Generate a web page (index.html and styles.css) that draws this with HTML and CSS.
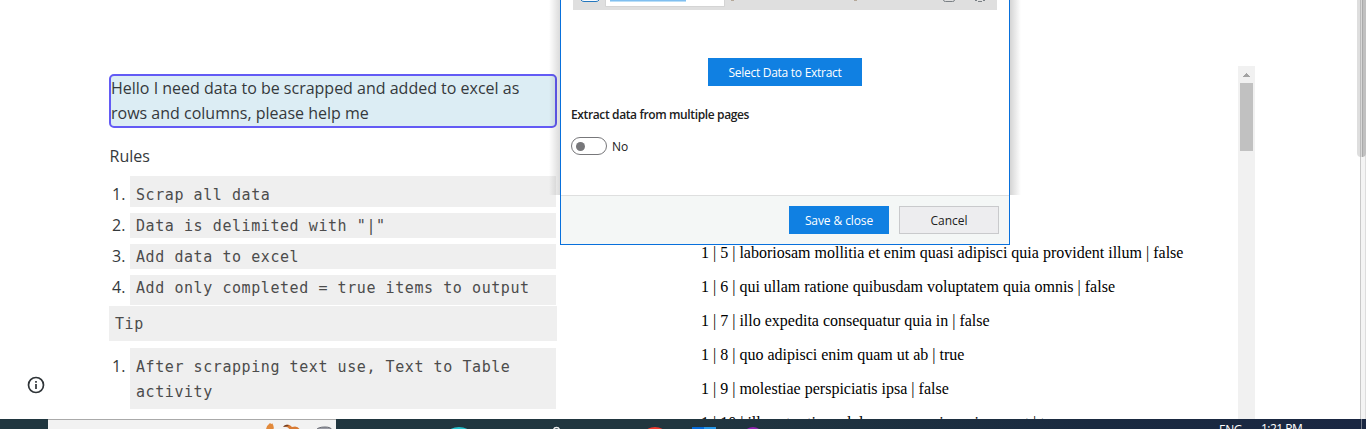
FILE: index.html
```
<!DOCTYPE html>
<html lang="en">
<head>
<meta charset="utf-8">
<title>Data scraping</title>
<link rel="stylesheet" href="styles.css">
</head>
<body>
<div class="screen">
  <main class="page">
    <aside class="rail">
      <svg class="info" width="18" height="18" viewBox="0 0 18 18"><circle cx="9" cy="9" r="7.5" fill="none" stroke="#2f3438" stroke-width="1.7"/><path d="M9 8v5M9 5v1.8" stroke="#2f3438" stroke-width="1.7"/></svg>
    </aside>
    <section class="post">
      <div class="question"><span class="q1">Hello I need data to be scrapped and added to excel as</span><br><span class="q2">rows and columns, please help me</span></div>
      <p class="heading">Rules</p>
      <ol class="rules">
        <li><span class="num">1.</span><code class="first">Scrap all data</code></li>
        <li><span class="num">2.</span><code>Data is delimited with "|"</code></li>
        <li><span class="num">3.</span><code>Add data to excel</code></li>
        <li><span class="num">4.</span><code class="last">Add only completed = true items to output</code></li>
      </ol>
      <code class="tip">Tip</code>
      <ol class="rules tips">
        <li><span class="num">1.</span><code class="first last">After scrapping text use, Text to Table<br>activity</code></li>
      </ol>
    </section>
    <section class="data">
      <p>1 | 5 | laboriosam mollitia et enim quasi adipisci quia provident illum | false</p>
      <p>1 | 6 | qui ullam ratione quibusdam voluptatem quia omnis | false</p>
      <p>1 | 7 | illo expedita consequatur quia in | false</p>
      <p>1 | 8 | quo adipisci enim quam ut ab | true</p>
      <p>1 | 9 | molestiae perspiciatis ipsa | false</p>
      <p>1 | 10 | illo est ratione doloremque quia maiores aut | true</p>
    </section>
    <div class="scroll"><svg width="17" height="17" viewBox="0 0 17 17"><path d="M5 11V10h1V9h1V8h1V7h1v1h1v1h1v1h1v1z" fill="#a3a3a3"/></svg><div class="thumb"></div></div>
    <div class="outer"><div class="outer-thumb"></div></div>
  </main>
  <footer class="taskbar">
    <div class="search">
      <svg width="288" height="10" viewBox="0 0 288 10"><path d="M218 10q0-4 4-7q2 2 2 0q3 4 1 7z" fill="#e28a3c"/><path d="M235 7q5-5 9 0q6-2 8 3h-10q-2-4-7-3" fill="#d87b35"/><path d="M235 7q3-4 6-1" fill="#704028"/><path d="M268 10q2-3 9-3q6 0 7 3" fill="#9a9ba4" stroke="#686b74"/></svg>
    </div>
    <svg class="apps" width="380" height="10" viewBox="0 0 380 10"><ellipse cx="75" cy="14" rx="11" ry="6" fill="#27c3ce"/><circle cx="172.500" cy="11.500" r="3" fill="none" stroke="#eee" stroke-width="1.300"/><ellipse cx="271" cy="14" rx="10" ry="6" fill="#ed3b31"/><path d="M308 8h12v2h-12z" fill="#066bd9"/><path d="M320 8h12v2h-12z" fill="#2798e9"/><ellipse cx="369" cy="14" rx="8" ry="6" fill="#8d23ad"/></svg>
    <div class="tray"><span>ENG</span><span class="clock">1:21 PM</span></div>
    <div class="desk-edge"></div>
  </footer>
  <div class="shadow left"></div>
  <div class="shadow right"></div>
  <div class="dialog">
    <div class="table-head">
      <svg width="424" height="10" viewBox="0 0 424 10"><path d="M8 0q1 1.500 3 1.500h12q2 0 3-1.500" fill="#f7fbff" stroke="#2477bd"/><path d="M33 0h118v6H33z" fill="#fff"/><path d="M32.500 0v6.500h119V0" fill="none" stroke="#d4d4d4"/><path d="M37 0h76v1H37z" fill="#80bff0"/><path d="M37 1h76v1H37z" fill="#b9def7"/><path d="M158 0h3v1h-3zM281 0h3v1h-3z" fill="#b5a899"/><path d="M370.500 0q0 1.500 2 1.500h7q2 0 2-1.500" fill="none" stroke="#7a8085"/><path d="M402 .5h2M405 1.500h4M410 .5h2" stroke="#7a8085"/></svg>
    </div>
    <div class="button primary select"><span>Select Data to Extract</span></div>
    <div class="label">Extract data from multiple pages</div>
    <div class="toggle-row"><span class="toggle"><i></i></span><span class="state">No</span></div>
    <div class="actions">
      <div class="button primary"><span class="save">Save &amp; close</span></div>
      <div class="button plain"><span>Cancel</span></div>
    </div>
  </div>
</div>
</body>
</html>
```
FILE: styles.css
```
* { box-sizing: border-box; }
body { margin: 0; background: #fff; overflow: hidden; }
p, ol { margin: 0; padding: 0; list-style: none; }
svg { display: block; flex: none; }
.screen { position: relative; width: 1366px; height: 429px; overflow: hidden; }
.page { display: flex; height: 419px; overflow: hidden; }
.rail { width: 109px; padding: 376px 0 0 27px; }
.post { width: 448px; padding-top: 74px; font: 16px/25px "Open Sans", "Noto Sans", sans-serif; color: #35393c; }
.question { height: 54px; border: 2px solid #635bf5; border-radius: 5px; background: #dcedf4; white-space: nowrap; }
.heading { margin-top: 16px; padding-left: .5px; }
.rules { margin-top: 7px; display: flex; flex-direction: column; gap: 6px; }
.rules li { display: flex; align-items: flex-start; }
.num { width: 21px; padding-left: 3px; }
.rules li:first-child .num { padding-top: 6px; }
code { display: block; font: 15px/25px "DejaVu Sans Mono", monospace; letter-spacing: .57px; color: #4c4c4c; background: #efefef; white-space: nowrap; }
.rules code { width: 426px; height: 25px; padding: 1px 0 0 6px; }
.rules .first { height: 31px; padding-top: 7px; }
.rules .last { height: 30px; }
.rules .first.last { height: 61px; }
.tip { height: 35px; margin-top: 1px; padding: 6px 6px 0; }
.tips { margin-top: 7px; }
.data { width: 681px; padding: 236px 0 0 144px; font: 16px/34px "Liberation Serif", serif; color: #000; white-space: nowrap; }
.scroll { width: 17px; height: 353px; margin-top: 66px; background: #f1f1f1; }
.thumb { width: 13px; height: 68px; margin-left: 2px; background: #c1c1c1; }
.outer { width: 6px; margin-left: 105px; background: #f4f4f4; border-left: 1px solid #c8c8c8; border-right: 1px solid #ddd; }
.outer-thumb { width: 9px; height: 157px; margin-left: -4px; border-radius: 0 0 4px 4px; background: linear-gradient(90deg, #dedede 0 3px, #bbb 3px 4px, #d8d8d8 4px 5px, #aaa 5px 6px, #c0c0c0 6px); }
.taskbar { display: flex; height: 10px; overflow: hidden; background: linear-gradient(90deg, #20363f, #21363f 50%, #1a2a40 80%, #1a2742); }
.search { flex: none; width: 288px; margin-left: 48px; background: #f2f2f2; border-top: 1px solid #aaa; }
.apps { margin-left: 48px; }
.tray { display: flex; flex: none; width: 84px; margin-left: 455px; padding-top: 4px; font: 12px/13px "Open Sans", sans-serif; color: #fff; letter-spacing: -.5px; white-space: nowrap; }
.clock { margin-left: 19px; margin-top: -1px; }
.desk-edge { width: 1px; margin-left: 58px; background: #737b89; }
.shadow { position: absolute; top: 0; height: 195px; width: 11px; }
.left { left: 549px; background: linear-gradient(90deg, transparent, rgba(0,0,0,.14)); }
.right { left: 1010px; background: linear-gradient(270deg, transparent, rgba(0,0,0,.17)); }
.dialog { position: absolute; left: 560px; top: 0; width: 450px; height: 245px; display: flex; flex-direction: column; background: #fff; border: 1px solid #0870dc; border-top: 0; font: 12px/16px "Open Sans", sans-serif; color: #202020; white-space: nowrap; }
.table-head { width: 424px; height: 10px; margin-left: 12px; background: #dfdfdf; }
.button { display: flex; width: 100px; height: 28px; align-items: center; justify-content: center; padding-top: 2px; }
.primary { background: #1080e2; color: #fff; }
.select { width: 154px; margin: 48px 0 0 147px; letter-spacing: -.27px; }
.save { letter-spacing: -.1px; }
.label { margin: 21px 0 0 10px; font-weight: 600; letter-spacing: -.37px; }
.toggle-row { display: flex; align-items: center; gap: 5px; height: 18px; margin: 14px 0 0 10px; }
.state { padding-top: 2px; }
.toggle { display: flex; align-items: center; width: 36px; height: 18px; padding-left: 4px; border: 1px solid #77777a; border-radius: 9px; }
.toggle i { width: 9px; height: 9px; border-radius: 50%; background: #77777a; }
.actions { display: flex; justify-content: flex-end; gap: 10px; height: 49px; margin-top: auto; padding: 10px 10px 0; border-top: 1px solid #dedfdf; background: #f4f7f6; }
.plain { background: #ededef; border: 1px solid #c9cacc; }
```
